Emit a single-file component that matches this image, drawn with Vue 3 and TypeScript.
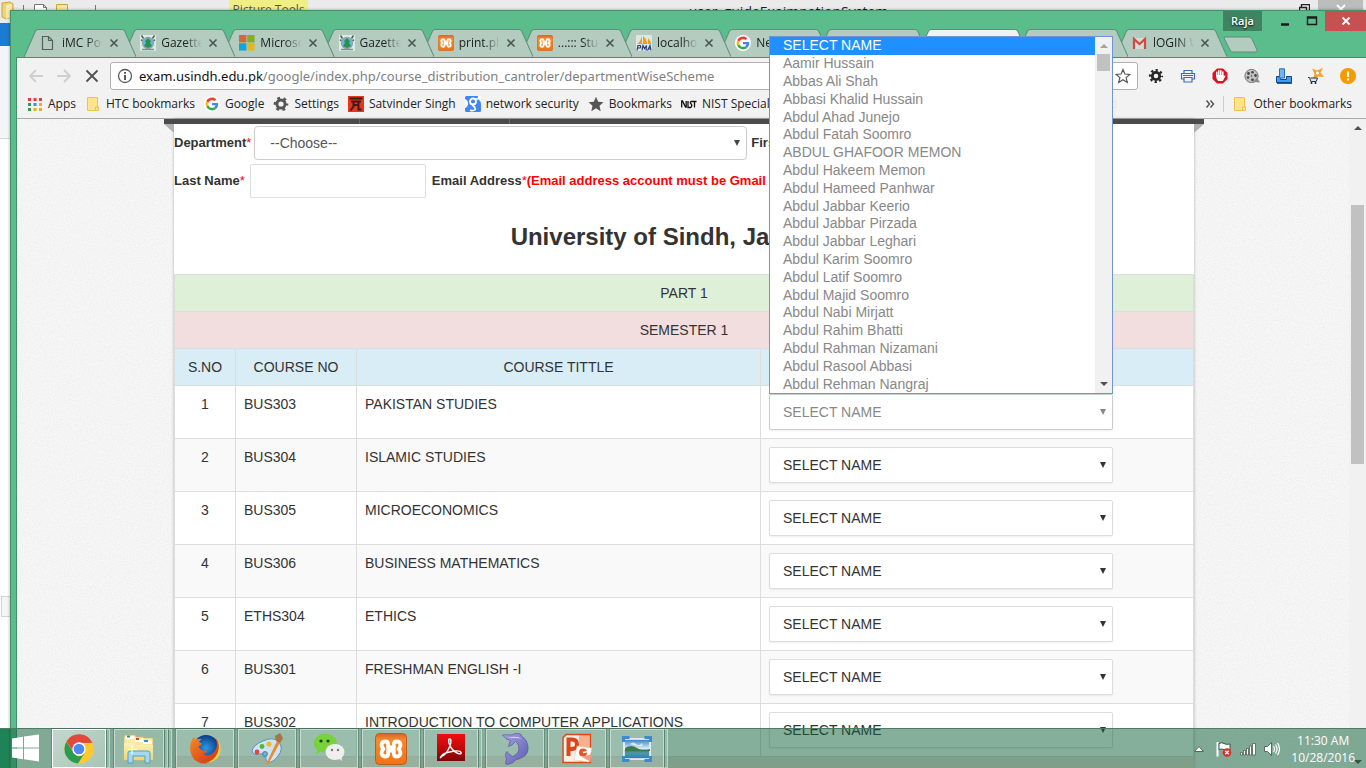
<script setup lang="ts">
import { ref } from 'vue'

interface Tab { icon: string; title: string; active?: boolean }
interface Course { no: number; code: string; title: string }
interface Task { icon: string; name: string; stack: number; active?: boolean }

const tabs: Tab[] = [
  { icon: 'page', title: 'iMC Po' },
  { icon: 'gazette', title: 'Gazette' },
  { icon: 'ms', title: 'Microso' },
  { icon: 'gazette', title: 'Gazette' },
  { icon: 'xampp', title: 'print.ph' },
  { icon: 'xampp', title: '...::: Stud' },
  { icon: 'pma', title: 'localho' },
  { icon: 'google', title: 'New' },
  { icon: '', title: '' },
  { icon: '', title: '', active: true },
  { icon: '', title: '' },
  { icon: 'gmail', title: 'lOGIN W' },
]

const bookmarks = [
  { icon: 'apps', label: 'Apps' },
  { icon: 'folder', label: 'HTC bookmarks' },
  { icon: 'google', label: 'Google' },
  { icon: 'gear', label: 'Settings' },
  { icon: 'torii', label: 'Satvinder Singh' },
  { icon: 'gblue', label: 'network security' },
  { icon: 'star', label: 'Bookmarks' },
  { icon: 'nist', label: 'NIST Special' },
]

const extensions = ['gear2', 'printer', 'hand', 'reel', 'blocks', 'cart', 'alert']

const names = [
  'SELECT NAME', 'Aamir Hussain', 'Abbas Ali Shah', 'Abbasi Khalid Hussain', 'Abdul Ahad Junejo',
  'Abdul Fatah Soomro', 'ABDUL GHAFOOR MEMON', 'Abdul Hakeem Memon', 'Abdul Hameed Panhwar',
  'Abdul Jabbar Keerio', 'Abdul Jabbar Pirzada', 'Abdul Jabbar Leghari', 'Abdul Karim Soomro',
  'Abdul Latif Soomro', 'Abdul Majid Soomro', 'Abdul Nabi Mirjatt', 'Abdul Rahim Bhatti',
  'Abdul Rahman Nizamani', 'Abdul Rasool Abbasi', 'Abdul Rehman Nangraj',
]

const courses: Course[] = [
  { no: 1, code: 'BUS303', title: 'PAKISTAN STUDIES' },
  { no: 2, code: 'BUS304', title: 'ISLAMIC STUDIES' },
  { no: 3, code: 'BUS305', title: 'MICROECONOMICS' },
  { no: 4, code: 'BUS306', title: 'BUSINESS MATHEMATICS' },
  { no: 5, code: 'ETHS304', title: 'ETHICS' },
  { no: 6, code: 'BUS301', title: 'FRESHMAN ENGLISH -I' },
  { no: 7, code: 'BUS302', title: 'INTRODUCTION TO COMPUTER APPLICATIONS' },
]

const tasks: Task[] = [
  { icon: 'chrome', name: 'Chrome', stack: 1, active: true },
  { icon: 'explorer', name: 'File Explorer', stack: 2 },
  { icon: 'firefox', name: 'Firefox', stack: 0 },
  { icon: 'paint', name: 'Paint', stack: 0 },
  { icon: 'wechat', name: 'WeChat', stack: 0 },
  { icon: 'xampp', name: 'XAMPP', stack: 0 },
  { icon: 'acrobat', name: 'Adobe Reader', stack: 1 },
  { icon: 'dolphin', name: 'MySQL', stack: 0 },
  { icon: 'ppt', name: 'PowerPoint', stack: 0 },
  { icon: 'photo', name: 'Photos', stack: 1 },
]

const highlighted = ref(0)
const lastName = ref('')
</script>

<template>
  <div class="desktop">
    <svg class="defs" aria-hidden="true">
      <defs>
        <linearGradient id="org" x1="0" y1="0" x2="0" y2="1"><stop offset="0" stop-color="#d5642a" /><stop offset=".2" stop-color="#f58a2c" /><stop offset="1" stop-color="#ef7413" /></linearGradient>
        <linearGradient id="redg" x1="0" y1="0" x2="0" y2="1"><stop offset="0" stop-color="#ef0f12" /><stop offset=".5" stop-color="#c40808" /><stop offset="1" stop-color="#7d0505" /></linearGradient>
        <linearGradient id="fold" x1="0" y1="0" x2="0" y2="1"><stop offset="0" stop-color="#fdf3b8" /><stop offset="1" stop-color="#ecd377" /></linearGradient>
        <linearGradient id="sky" x1="0" y1="0" x2="0" y2="1"><stop offset="0" stop-color="#2b7cc9" /><stop offset=".5" stop-color="#dff1fa" /><stop offset=".55" stop-color="#3f7a55" /><stop offset=".7" stop-color="#4f98b0" /><stop offset="1" stop-color="#2f78ae" /></linearGradient>
        <radialGradient id="globe"><stop offset="0" stop-color="#2a9be6" /><stop offset="1" stop-color="#0b3a86" /></radialGradient>
        <linearGradient id="fox" x1="0" y1="0" x2="1" y2="1"><stop offset="0" stop-color="#f58a1f" /><stop offset=".6" stop-color="#e2501b" /><stop offset="1" stop-color="#c4331c" /></linearGradient>
        <linearGradient id="dol" x1="0" y1="0" x2="1" y2="1"><stop offset="0" stop-color="#a5a4e6" /><stop offset="1" stop-color="#5e5cae" /></linearGradient>
      </defs>
      <symbol id="i-page" viewBox="0 0 16 16"><path d="M1.500 1.500h6l4 4v9h-10zM7.500 1.500v4h4" fill="none" stroke="#55605a" stroke-width="1.200" /></symbol>
      <symbol id="i-gazette" viewBox="0 0 16 16"><path d="M0 0h16v16H0z" fill="#dcebe4" /><path d="M1.500 0.500l2 3M14.500.5l-2 3M1 5l3 1M15 5l-3 1" stroke="#4b5a55" stroke-width="1.400" /><circle cx="8" cy="8" r="6.200" fill="#8fa3a8" /><circle cx="8" cy="8" r="5" fill="#62b9e0" /><path d="M8 3l3 3-1 2 2 3-4 2-4-2 2-3-1-2z" fill="#2f8f4e" /><path d="M2 14.500h12" stroke="#7d938b" stroke-width="1.500" /></symbol>
      <symbol id="i-ms" viewBox="0 0 16 16"><path d="M0 0h7.400v7.400H0z" fill="#d9653a" /><path d="M8.200 0h7.400v7.400H8.200z" fill="#7ab51d" /><path d="M0 8.200h7.400v7.400H0z" fill="#12a5dc" /><path d="M8.200 8.200h7.400v7.400H8.200z" fill="#e0b81e" /></symbol>
      <symbol id="i-xampp" viewBox="0 0 32 32"><rect x=".5" y=".5" width="31" height="31" rx="4" fill="url(#org)" stroke="#c25a1b" /><path d="M10.500 8.500C6 8.500 5.500 13 8.500 16C5.500 19 6 23.500 10.500 23.500C13.500 23.500 13.500 20.500 13 17.500L19 17.500C18.500 20.500 18.500 23.500 21.500 23.500C26 23.500 26.500 19 23.500 16C26.500 13 26 8.500 21.500 8.500C18.500 8.500 18.500 11.500 19 14.500L13 14.500C13.500 11.500 13.500 8.500 10.500 8.500Z" fill="none" stroke="#fff" stroke-width="3.800" stroke-linejoin="round" /></symbol>
      <symbol id="i-pma" viewBox="0 0 16 16"><path d="M0 0h16v16H0z" fill="#dce7e2" /><path d="M6 1v8H1q4-3 5-8zM7 1q4 3 4 8H7zM12 3q3 3 3 6h-3z" fill="#ef9d19" /><path d="M1 15.500l1-5h2q1.500 1.300 0 2.500H2M6 15.500l1-5 1.500 3 2-3-.5 5M11.500 15.500l2.500-5 1 5M12.500 14h2" fill="none" stroke="#283c78" stroke-width="1.200" /></symbol>
      <symbol id="i-google" viewBox="0 0 60 60"><circle cx="30" cy="30" r="30" fill="#fff" /><g transform="translate(6 6)"><path fill="#EA4335" d="M24 9.500c3.540 0 6.710 1.220 9.210 3.600l6.850-6.850C35.900 2.380 30.470 0 24 0 14.620 0 6.510 5.380 2.560 13.220l7.980 6.190C12.430 13.720 17.740 9.500 24 9.500z" /><path fill="#4285F4" d="M46.980 24.550c0-1.570-.15-3.090-.38-4.550H24v9.020h12.940c-.58 2.960-2.260 5.480-4.780 7.180l7.730 6c4.510-4.180 7.090-10.360 7.090-17.650z" /><path fill="#FBBC05" d="M10.530 28.590c-.48-1.450-.76-2.990-.76-4.590s.27-3.140.76-4.590l-7.980-6.190C.92 16.460 0 20.120 0 24s.92 7.540 2.560 10.780l7.970-6.190z" /><path fill="#34A853" d="M24 48c6.480 0 11.930-2.130 15.890-5.810l-7.730-6c-2.150 1.450-4.920 2.300-8.160 2.300-6.260 0-11.570-4.220-13.470-9.910l-7.980 6.190C6.510 42.620 14.620 48 24 48z" /></g></symbol>
      <symbol id="i-gmail" viewBox="0 0 16 16"><path d="M1 3h12v11H1z" fill="#d3dcd7" /><path d="M2 14V4l5.500 5L13 4v10" fill="none" stroke="#d34a3d" stroke-width="2.200" /></symbol>
      <symbol id="i-apps" viewBox="0 0 16 16"><path d="M1 2h3v3H1zM6.500 2h3v3h-3z M12 2h3v3h-3z" fill="#e53d33" /><path d="M1 7h3v3H1zM1 12h3v3H1z" fill="#2f9e54" /><path d="M6.500 7h3v3h-3z" fill="#4285f4" /><path d="M12 7h3v3h-3zM12 12h3v3h-3zM6.500 12h3v3h-3z" fill="#f0a91c" /></symbol>
      <symbol id="i-folder" viewBox="0 0 16 16"><path d="M2.500 1.500h10v9.500h1v3.500h-11z" fill="#ffe38d" stroke="#ecc44d" /><path d="M10.500 14v-3h3" fill="none" stroke="#ecc44d" /></symbol>
      <symbol id="i-gear" viewBox="0 0 16 16"><g fill="none" stroke="#565656"><circle cx="8" cy="8" r="4.100" stroke-width="3" /><circle cx="8" cy="8" r="6" stroke-width="2.600" stroke-dasharray="2.700 3.583" stroke-dashoffset="1.300" /></g></symbol>
      <symbol id="i-gear2" viewBox="0 0 16 16"><g fill="none" stroke="#262626"><circle cx="8" cy="8" r="3.700" stroke-width="2.800" /><circle cx="8" cy="8" r="5.900" stroke-width="2.400" stroke-dasharray="2.200 2.433" stroke-dashoffset="1.100" /></g></symbol>
      <symbol id="i-torii" viewBox="0 0 16 16"><path d="M0 0h16v16H0z" fill="#e8341c" /><path d="M1.500 2.500h13M3 5.500h10M5.500 5.500v5l-3 4M10.500 5.500v8h3M5 9h6" stroke="#3c1c14" stroke-width="2" fill="none" /></symbol>
      <symbol id="i-gblue" viewBox="0 0 16 16"><rect width="16" height="16" rx="1.500" fill="#4285f4" /><path d="M0 3q3 1 3 4.500T0 12M13 0q-1 3 1 4t2 4V0z" fill="#fff" /><circle cx="8" cy="5.500" r="3" fill="none" stroke="#fff" stroke-width="1.800" /><path d="M9.500 8q-3 1-1 2.200t1.800 3.300q-2.300 2.200-5.300.5M10 3h3" fill="none" stroke="#fff" stroke-width="1.700" /></symbol>
      <symbol id="i-star" viewBox="0 0 16 16"><path d="M8 .8l2.200 5 5.300.4-4 3.600 1.200 5.400L8 12.300l-4.700 2.900 1.200-5.400-4-3.600 5.300-.4z" fill="#555" /></symbol>
      <symbol id="i-nist" viewBox="0 0 16 16"><path d="M.7 11.500V5h.8l3 6h.7V5M7 5v6.500h3M15.500 5.500H10q-1.500 1 0 2.300t0 3.700M13.500 5.500v6" fill="none" stroke="#111" stroke-width="1.300" /></symbol>
      <symbol id="i-printer" viewBox="0 0 16 16"><path d="M4 5V2.500h8V5M3.500 11H1.500V5.500h13V11h-2M4 9.500h8V14H4zM3 7.500h10" fill="none" stroke="#3b6fb5" stroke-width="1.200" /></symbol>
      <symbol id="i-hand" viewBox="0 0 16 16"><path d="M5 .5h6L15.500 5v6L11 15.500H5L.5 11V5z" fill="#df1020" /><path d="M4.800 8V4.300M6.800 7V2.800M8.800 7V2.800M10.800 8V4" stroke="#fff" stroke-width="1.500" stroke-linecap="round" /><path d="M4 7h7.600v1.500L13 7.300q.8.300.2 1.200l-2.400 4.500H6.200Q4 11 4 7z" fill="#fff" /></symbol>
      <symbol id="i-reel" viewBox="0 0 16 16"><circle cx="7.500" cy="8" r="6.600" fill="#c4c4c4" stroke="#777" /><path d="M9 14l7 .5-3-5z" fill="#8b8b8b" /><g fill="#484848"><circle cx="4.500" cy="5.500" r="1.400" /><circle cx="8.500" cy="4.300" r="1.300" /><circle cx="11.500" cy="7.500" r="1.400" /><circle cx="4" cy="9.500" r="1.300" /><circle cx="7.500" cy="8" r=".8" /><circle cx="8.500" cy="11.800" r="1.400" /></g></symbol>
      <symbol id="i-blocks" viewBox="0 0 16 16"><path d="M.5 8.500h4v3h6v-3h5v6H.5z" fill="#3f9df2" stroke="#15457f" /><path d="M3.500.8h5V10h-5z" fill="#6fb4f3" stroke="#2c6db5" /><path d="M1 15.300h15" stroke="#12335c" /></symbol>
      <symbol id="i-cart" viewBox="0 0 16 16"><path d="M4 .5l4.500 2L15 0l-2.500 4.500L16 9l-5.500-.5L5 11l1.500-5z" fill="#f6a12c" /><circle cx="9.500" cy="5" r="1.500" fill="#fff" /><path d="M0 9.500h1.500l1.300 4h5.400L9.500 10H2.500" fill="#d5e3f2" stroke="#27364a" /><circle cx="3.500" cy="15" r="1" fill="#222" /><circle cx="7.500" cy="15" r="1" fill="#222" /></symbol>
      <symbol id="i-alert" viewBox="0 0 16 16"><circle cx="8" cy="8" r="8" fill="#f59b00" /><path d="M7 3.500h2v5.500H7zM7 10.500h2v2H7z" fill="#fff" /></symbol>
      <symbol id="i-chrome" viewBox="0 0 32 32"><circle cx="16" cy="16" r="14.600" fill="#fdc92f" /><path d="M3.500 8.500A14.600 14.600 0 0 1 29.500 10H16a6.500 6.500 0 0 0-6 8z" fill="#e2483c" /><path d="M3.400 8.700A14.600 14.600 0 0 0 15 30.600l6.500-10a6.500 6.500 0 0 1-11.300-1.500z" fill="#2a9c51" /><circle cx="16" cy="16" r="6.700" fill="#fff" /><circle cx="16" cy="16" r="5.300" fill="#4a8af4" /></symbol>
      <symbol id="i-explorer" viewBox="0 0 32 32"><path d="M1 5l1-3h10l1 2h7l1 1h9v22H1z" fill="url(#fold)" stroke="#d0b65c" stroke-width=".8" /><path d="M3 3h8v3H3zM12 6h8v3h-8zM20 8h9v3h-9z" fill="#fff" /><path d="M4 2.500h3v2H4z" fill="#24a344" /><path d="M13 5h3v2h-3z" fill="#d14a2c" /><path d="M21 7h4v2h-4z" fill="#2c93d1" /><path d="M1 10h9l2 2h18v15H1z" fill="url(#fold)" /><path d="M5 30V20q0-2 2-2h18q2 0 2 2v10h-5v-7H10v7z" fill="#a5d8ee" stroke="#4fa0c9" /><path d="M9 12v9M5 16.500h9" stroke="#fff" stroke-width="1.200" /></symbol>
      <symbol id="i-firefox" viewBox="0 0 32 32"><circle cx="17" cy="15" r="13" fill="url(#globe)" /><path d="M27 5q6 8 2.500 15.500T17 30.500Q6 31 2.500 22T4 5q2-2 2 2 3-2 7-1-2 1-3 3l3 1.500q-1 2-3.500 3 1 3 4 4 3 .5 5-.5-1 3.500-4.500 4 5 3 9.500-.5T28 11z" fill="url(#fox)" /><path d="M27 4q5 8 1.500 16T16 30q14-1 15.500-12Q32 10 27 4z" fill="#f8cf3c" /></symbol>
      <symbol id="i-paint" viewBox="0 0 32 32"><path d="M12 8q10-5 16 1 5 7-1 14-5 7-10 6-3-1-2-5 0-4-6-3-7 2-8-3Q2 12 12 8z" fill="#cfe3f2" stroke="#5c90bb" /><circle cx="6" cy="19" r="2.400" fill="#e4453c" /><circle cx="11" cy="13.500" r="2.400" fill="#4fb83c" /><circle cx="18" cy="11" r="2.600" fill="#f3b92b" /><circle cx="14" cy="21" r="2.400" fill="#7bb3d5" stroke="#427aa0" /><path d="M15 31L26 8l3 1.500-12 22z" fill="#e88d2b" /><path d="M25 8l-1-5 5-3 3 5-3 5z" fill="#a67448" /></symbol>
      <symbol id="i-wechat" viewBox="0 0 32 32"><path d="M2.500 21.500L4.500 17A11.500 9.500 0 1 1 11 19.500L7.500 19z" fill="#77d23d" /><circle cx="8" cy="8" r="1.600" fill="#1f4716" /><circle cx="15" cy="8" r="1.600" fill="#1f4716" /><ellipse cx="22" cy="19" rx="9.500" ry="8" fill="#eeefee" /><path d="M25 25l4 3-.5-5z" fill="#eeefee" /><circle cx="19" cy="17" r="1.200" fill="#777" /><circle cx="25" cy="17" r="1.200" fill="#777" /></symbol>
      <symbol id="i-acrobat" viewBox="0 0 32 32"><path d="M2 1h28v27H2z" fill="url(#redg)" /><path d="M7 23q4-1 8-10 2-6 0-7t-1 4q2 7 8 10 5 2 4-.5t-9-1q-8 1-10.500 4.500T7 23z" fill="none" stroke="#fff" stroke-width="1.400" /></symbol>
      <symbol id="i-dolphin" viewBox="0 0 32 32"><path d="M3.500 2q5-.5 9 0 6-3 9-1 1 1.500 1 2 6 4 6.500 11 .5 6-3.500 9-5 3-9 4-1.500 3-8 4.500-3-.5-2-2 2-3 0-7 0-3 1.500-4 2 3 5.500 5 8-3 6-11-1-3-3-4-3 4-7 5 1-4 2-6-5-1-8-5.500z" fill="url(#dol)" stroke="#4d4c93" stroke-width=".6" /><path d="M9 5q8-3 14 1-7-2-14-1z" fill="#dcdcfa" /></symbol>
      <symbol id="i-ppt" viewBox="0 0 32 32"><path d="M5 1.500h24.500v28H2V4.500z" fill="#f6b08d" stroke="#d9491c" stroke-width="1.300" /><path d="M3 5L6 2.500h12v26H3z" fill="#fdeee6" /><path d="M7.500 23V6.500h3.500q5 0 5 4.700T11 16H8" fill="none" stroke="#d8481a" stroke-width="4" /><path d="M16 13l15 2-3 14-15-2z" fill="#fff" stroke="#e9b9a3" stroke-width=".5" /><circle cx="22" cy="19.500" r="4" fill="#e2562a" /><path d="M22 19.500l5-1" stroke="#fff" stroke-width="1.500" /><path d="M21 24l9 5 1-8z" fill="#f09c7c" /></symbol>
      <symbol id="i-photo" viewBox="0 0 32 32"><path d="M3 6h26v20H3z" fill="url(#sky)" stroke="#f7fbfd" stroke-width="1.500" /><path d="M4 15q6-4 12 0t13 1v2H4z" fill="#3d7a4d" /><path d="M9 11q3-3 6 0t6-1q2 4-4 3t-8-2z" fill="#fff" opacity=".7" /><g fill="none" stroke="#3a8cd0" stroke-width="3"><path d="M2.500 9V4.500h6M23.500 4.500h6V9M29.500 23v4.500h-6M8.500 27.500h-6V23" /></g></symbol>
    </svg>

    <!-- window partly visible behind the browser -->
    <div class="back">
      <div class="back-title">
        <svg class="back-icons" viewBox="0 0 110 23" aria-hidden="true">
          <path d="M2 3l8-1 3 2v13l-7 2-4-2z" fill="#efd476" stroke="#c9a744" /><path d="M6 5l6-1v13l-6 2z" fill="#f8e9ae" />
          <path d="M23.500 5v14M95.500 5v14" stroke="#777" /><path d="M34.500 4.500h9l3 3v12h-12zM43.500 4.500v3h3" fill="#fff" stroke="#777" />
          <path d="M56.500 4.500h11v12h-11z" fill="#f8e3a0" stroke="#c9a23c" />
        </svg>
        <span class="pic-tools">Picture Tools</span>
        <span class="back-name">user_guideExaimnationSystem</span>
        <svg class="restore" viewBox="0 0 11 10" aria-hidden="true"><path d="M.5 3.500h7v6h-7zM2.500 3.500v-3h8v7h-3" fill="none" stroke="#222" stroke-width="1.400" /></svg>
        <span class="back-close"><svg viewBox="0 0 12 12" aria-hidden="true"><path d="M2 2l8 8M10 2l-8 8" stroke="#fff" stroke-width="1.800" /></svg></span>
      </div>
      <div class="back-blue"></div>
      <div class="back-pane"></div>
      <div class="back-body"><i></i></div>
      <div class="back-foot"></div>
    </div>

    <div class="window">
      <div class="controls">
        <button class="user">Raja</button>
        <button class="ctl" aria-label="Minimize"><svg viewBox="0 0 12 12"><path d="M2 9.500h8" stroke="#1c1c1c" stroke-width="2.500" /></svg></button>
        <button class="ctl" aria-label="Maximize"><svg viewBox="0 0 12 12"><path d="M1.500 2h9v7.500h-9zM1 3h10" fill="none" stroke="#1c1c1c" stroke-width="1.400" /></svg></button>
        <button class="ctl close" aria-label="Close"><svg viewBox="0 0 12 12"><path d="M2.500 2.500l7 7M9.500 2.500l-7 7" stroke="#fff" stroke-width="1.800" /></svg></button>
      </div>

      <div class="tabstrip">
        <div class="tabs">
          <div v-for="(t, i) in tabs" :key="i" class="tab" :style="{ zIndex: t.active ? 20 : 15 - i }">
            <svg class="shape" viewBox="0 0 112 28" preserveAspectRatio="none" aria-hidden="true">
              <path d="M0 28L11.500 2Q12.500.5 14.500.5H97.500Q99.500.5 100.500 2L112 28z" :fill="t.active ? '#f2f2f2' : '#b4ccc0'" />
              <path d="M0 28L11.500 2Q12.500.5 14.500.5H97.500Q99.500.5 100.500 2L112 28" fill="none" stroke="#5c8f77" />
            </svg>
            <template v-if="t.icon">
              <svg class="fav"><use :href="'#i-' + t.icon" /></svg>
              <span class="tab-title">{{ t.title }}</span>
              <button class="tab-x" aria-label="Close tab"><svg viewBox="0 0 10 10"><path d="M1.500 1.500l7 7M8.500 1.500l-7 7" stroke="#4c5651" stroke-width="1.600" /></svg></button>
            </template>
          </div>
        </div>
        <button class="newtab" aria-label="New tab"><svg viewBox="0 0 36 18"><path d="M2 1h24q2 0 3 2l5 11q1 2-1 2H10q-2 0-3-2L1.500 3Q.5 1 2 1z" fill="#b4ccc0" stroke="#5c8f77" /></svg></button>
      </div>

      <div class="client">
        <div class="toolbar">
          <button class="nav" aria-label="Back"><svg viewBox="0 0 16 16"><path d="M15 8H2M8 2L2 8l6 6" fill="none" stroke="#cfcfcf" stroke-width="1.800" /></svg></button>
          <button class="nav" aria-label="Forward"><svg viewBox="0 0 16 16"><path d="M1 8h13M8 2l6 6-6 6" fill="none" stroke="#cfcfcf" stroke-width="1.800" /></svg></button>
          <button class="nav" aria-label="Stop"><svg viewBox="0 0 16 16"><path d="M2.500 2.500l11 11M13.500 2.500l-11 11" stroke="#505050" stroke-width="1.800" /></svg></button>
          <div class="omni">
            <svg class="info" viewBox="0 0 16 16"><circle cx="8" cy="8" r="6.500" fill="none" stroke="#5a5a5a" stroke-width="1.300" /><path d="M7 7h2v5H7zM7 4h2v1.800H7z" fill="#5a5a5a" /></svg>
            <span class="url"><b>exam.usindh.edu.pk</b>/google/index.php/course_distribution_cantroler/departmentWiseScheme</span>
            <svg class="fav-star" viewBox="0 0 16 16"><path d="M8 1.500l1.900 4.500 4.900.4-3.700 3.200 1.200 4.800L8 11.800l-4.300 2.600 1.200-4.800L1.200 6.400 6.100 6z" fill="none" stroke="#555" stroke-width="1.200" /></svg>
          </div>
          <div class="exts">
            <button v-for="e in extensions" :key="e" class="ext" :aria-label="e"><svg><use :href="'#i-' + e" /></svg></button>
          </div>
        </div>

        <nav class="bookmarks">
          <a v-for="b in bookmarks" :key="b.label" href="#" class="bm"><svg class="bm-icon"><use :href="'#i-' + b.icon" /></svg>{{ b.label }}</a>
          <span class="bm-rest">ti</span>
          <button class="more" aria-label="More bookmarks"><svg viewBox="0 0 10 10"><path d="M1.500 1.500L4.500 5l-3 3.500M5.500 1.500L8.500 5l-3 3.500" fill="none" stroke="#505050" stroke-width="1.400" /></svg></button>
          <i class="sep"></i>
          <a href="#" class="bm"><svg class="bm-icon"><use href="#i-folder" /></svg>Other bookmarks</a>
        </nav>

        <div class="viewport">
          <svg class="paper" aria-hidden="true">
            <filter id="grain"><feTurbulence type="fractalNoise" baseFrequency=".7" numOctaves="3" /><feColorMatrix values="0 0 0 0 .5  0 0 0 0 .5  0 0 0 0 .5  .3 0 0 0 -.1" /></filter>
            <rect width="100%" height="100%" filter="url(#grain)" />
          </svg>
          <div class="scroll-area">
            <div class="page">
              <div class="menubar"><i></i><i></i></div>
              <form class="form" @submit.prevent>
                <div class="line">
                  <label for="dept">Department<em>*</em></label>
                  <span class="sel dept"><select id="dept"><option>--Choose--</option></select></span>
                  <span class="lbl">First Name</span>
                </div>
                <div class="line">
                  <label for="last">Last Name<em>*</em></label>
                  <input id="last" v-model="lastName" type="text" />
                  <span class="lbl email">Email Address<em>*</em><strong>(Email address account must be Gmail</strong></span>
                </div>
              </form>
              <h1>University of Sindh, Jamshoro</h1>
              <table>
                <colgroup><col class="c1" /><col class="c2" /><col class="c3" /><col /></colgroup>
                <thead>
                  <tr class="part"><th colspan="4">PART 1</th></tr>
                  <tr class="sem"><th colspan="4">SEMESTER 1</th></tr>
                  <tr class="cols"><th>S.NO</th><th>COURSE NO</th><th>COURSE TITTLE</th><th></th></tr>
                </thead>
                <tbody>
                  <tr v-for="(c, i) in courses" :key="c.code">
                    <td class="num">{{ c.no }}</td>
                    <td>{{ c.code }}</td>
                    <td>{{ c.title }}</td>
                    <td class="pick">
                      <span class="sel" :class="{ open: i === 0 }">
                        <select :aria-label="'Teacher for ' + c.title"><option>SELECT NAME</option></select>
                        <span v-if="i === 0" class="popup">
                          <span class="options" role="listbox" aria-label="Names">
                            <span v-for="(n, k) in names" :key="n" role="option" :aria-selected="k === highlighted" class="option" :class="{ on: k === highlighted }">{{ n }}</span>
                          </span>
                          <span class="pop-scroll"><i class="up"></i><i class="pop-thumb"></i><i class="down"></i></span>
                        </span>
                      </span>
                    </td>
                  </tr>
                  <tr class="sem"><td colspan="4" class="num">&nbsp;</td></tr>
                </tbody>
              </table>
            </div>
          </div>
          <div class="scrollbar"><i class="up"></i><i class="thumb"></i><i class="down"></i></div>
        </div>
      </div>
    </div>

    <footer class="taskbar">
      <button class="start" aria-label="Start"><svg viewBox="0 0 28 28"><path d="M0 4.500l11-1.700v10.700H0zM12 2.600L27 .5v13H12zM0 14.500h11v10.700L0 23.500zM12 14.500h15v13l-15-2.200z" fill="#fff" /></svg></button>
      <button v-for="t in tasks" :key="t.name" class="task" :class="{ active: t.active }" :aria-label="t.name">
        <span class="face"><svg><use :href="'#i-' + t.icon" /></svg></span>
        <i v-for="n in t.stack" :key="n" class="edge"></i>
      </button>
      <div class="tray">
        <svg class="chev" viewBox="0 0 10 6"><path d="M5 .5L9.500 5.500h-9z" fill="#fff" stroke="#4d6b5d" /></svg>
        <svg class="tico" viewBox="0 0 16 16"><path d="M1.500 1v14.500" stroke="#fff" stroke-width="2" /><path d="M3 2.500q3-1.500 5 0t6 .5v6q-4 .5-6-.500t-5 0z" fill="#fff" stroke="#3d5248" /><circle cx="11" cy="11.500" r="4.300" fill="#dc2a22" /><path d="M9.200 9.700l3.600 3.600M12.800 9.700l-3.600 3.600" stroke="#fff" stroke-width="1.500" /></svg>
        <svg class="tico" viewBox="0 0 16 16"><path d="M.5 11.500h2v2.500h-2zM3.500 9.500h2V14h-2zM6.500 7.500h2V14h-2zM9.500 5h2v9h-2zM12.500 2.500h3V14h-3z" fill="#fff" stroke="#3d5248" stroke-width=".7" /></svg>
        <svg class="tico" viewBox="0 0 16 16"><path d="M.5 5.500h3l4-4v13l-4-4h-3z" fill="#fff" stroke="#3d5248" stroke-width=".8" /><path d="M9.500 5q2 3 0 6M11.500 3.500q3 4.500 0 9M13.500 2q4 6 0 12" fill="none" stroke="#fff" stroke-width="1.200" /></svg>
        <div class="clock"><span>11:30 AM</span><span>10/28/2016</span></div>
      </div>
    </footer>
  </div>
</template>

<style>
body { margin: 0; overflow: hidden; }
</style>

<style scoped>
* { box-sizing: border-box; }
button { border: 0; padding: 0; background: none; font: inherit; color: inherit; }
svg { display: block; }
.defs { position: absolute; width: 0; height: 0; }
.desktop { position: relative; height: 100vh; overflow: hidden; background: #fff; font: 12px/16px "Open Sans", "Noto Sans", sans-serif; color: #222; }

.back { display: flex; flex-direction: column; height: 100%; }
.back-title { display: flex; height: 23px; background: #ebebeb; flex: none; }
.back-icons { width: 110px; height: 23px; }
.pic-tools { margin-left: 119px; width: 79px; background: #f1ef83; text-align: center; line-height: 20px; height: 23px; color: #555; }
.back-name { flex: 1; text-align: center; font-size: 14px; line-height: 24px; padding-right: 30px; }
.restore { width: 11px; height: 10px; margin-top: 4px; }
.back-close { display: flex; justify-content: center; margin: 0 3px 0 8px; width: 45px; background: #bcbcbc; }
.back-close svg { width: 12px; height: 12px; margin-top: 3px; }
.back-blue { height: 23px; background: #1c7bd0; flex: none; }
.back-pane { height: 93px; background: #f3f5f8; border-bottom: 1px solid #d4d7dc; flex: none; }
.back-body { flex: 1; display: flex; align-items: flex-end; padding: 0 0 111px 1px; }
.back-body i { width: 20px; height: 21px; background: #f5f5f5; border: 1px solid #d4d4d4; }
.back-foot { height: 40px; background: #2fa977; flex: none; }

.window { position: absolute; inset: 10px 0 0 10px; background: #5bbd8c; border: 1px solid #43906a; border-width: 1px 0 0 1px; display: flex; flex-direction: column; box-shadow: 0 0 3px #0005; }
.controls { display: flex; justify-content: flex-end; height: 18px; flex: none; }
.user { width: 39px; height: 20px; margin-right: 9px; background: #3f8362; color: #fff; line-height: 20px; text-shadow: 0 1px 2px #000; font-size: 11px; font-weight: 600; }
.ctl { width: 27px; height: 20px; display: grid; place-items: center; }
.ctl svg { width: 12px; height: 12px; }
.ctl.close { width: 41px; background: #c75050; }

.tabstrip { display: flex; height: 28px; padding: 0 107px 0 13px; flex: none; }
.tabs { display: flex; flex: 1; min-width: 0; }
.tab { position: relative; flex: 1 1 0; min-width: 0; margin-right: -13px; display: flex; align-items: center; padding: 0 17px; }
.shape { position: absolute; inset: 0; width: 100%; height: 28px; }
.fav { position: relative; width: 16px; height: 16px; flex: none; }
.tab-title { position: relative; flex: 1; min-width: 0; margin: 0 6px 0 5px; overflow: hidden; white-space: nowrap; mask-image: linear-gradient(90deg, #000 60%, transparent); }
.tab-x { position: relative; width: 10px; height: 10px; }
.newtab { width: 36px; height: 18px; margin: 7px 0 0 9px; }
.newtab svg { width: 36px; height: 18px; }

.client { flex: 1; min-height: 0; display: flex; flex-direction: column; margin-left: 5px; border: 1px solid #43906a; border-width: 1px 0 0 1px; }
.toolbar { display: flex; align-items: center; height: 36px; padding: 0 10px 0 11px; background: #f2f2f2; flex: none; }
.nav { width: 16px; height: 16px; margin-right: 12px; }
.nav + .nav + .nav { margin-right: 10px; }
.omni { flex: 1; display: flex; align-items: center; height: 28px; background: #fff; border: 1px solid #b0b0b0; border-radius: 3px; padding: 0 6px; min-width: 0; }
.info { width: 16px; height: 16px; margin-right: 6px; }
.url { flex: 1; font: 13px/20px "Noto Sans", "Open Sans", sans-serif; color: #808080; white-space: nowrap; overflow: hidden; }
.url b { font-weight: 400; color: #111; }
.fav-star { width: 16px; height: 16px; }
.exts { display: flex; gap: 16px; margin-left: 10px; }
.ext, .ext svg { width: 16px; height: 16px; }
.bookmarks { display: flex; align-items: center; height: 25px; padding: 0 14px 4px 10px; background: #f2f2f2; border-bottom: 1px solid #a9a9a9; flex: none; white-space: nowrap; }
.bm { display: flex; align-items: center; gap: 5px; margin-right: 9px; color: #222; text-decoration: none; }
.bm:last-child { margin-right: 0; }
.bm-icon { width: 16px; height: 16px; flex: none; }
.bm-rest { margin: 0 88px 0 auto; color: #aaa; mask-image: linear-gradient(90deg, #000, transparent); }
.more { width: 10px; height: 10px; }
.more svg { width: 10px; height: 10px; }
.sep { width: 1px; height: 16px; background: #ccc; margin: 0 8px; }

.viewport { position: relative; flex: 1; min-height: 0; display: flex; background: #f7f7f7; font: 14px/20px "Liberation Sans", Arial, sans-serif; color: #333; }
.paper { position: absolute; inset: 0; width: 100%; height: 100%; }
.scroll-area { position: relative; flex: 1; padding: 0 155px 0 157px; }
.page { background: #fff; box-shadow: 0 0 3px #0004; }
.menubar { position: relative; height: 5px; margin: 0 -10px; background: #4b4b4b; display: flex; padding-left: 195px; gap: 149px; }
.menubar i { width: 1px; background: #6a6a6a; }
.menubar::before, .menubar::after { content: ""; position: absolute; top: 5px; left: 0; border-top: 9px solid #b0b0b0; border-left: 10px solid transparent; }
.menubar::after { left: auto; right: 0; border-left: 0; border-right: 10px solid transparent; }
.form { padding-top: 2px; font-size: 13px; font-weight: 700; white-space: nowrap; }
.line { display: flex; align-items: center; height: 34px; margin-bottom: 4px; overflow: hidden; }
em { font-style: normal; font-weight: 400; color: red; }
strong { color: red; }
.dept { margin: 0 4px 0 3px; }
.lbl.email { margin-left: 6px; }
input { width: 176px; height: 34px; margin-left: 5px; border: 1px solid #ddd; border-radius: 2px; background: #fff; box-shadow: 0 1px 1px #0001; font: inherit; }
.sel { position: relative; display: block; width: 344px; }
.sel select { display: block; width: 100%; height: 36px; padding: 0 13px; appearance: none; border: 1px solid #ddd; border-radius: 2px; background: #fff; font: 14px "Liberation Sans", Arial, sans-serif; color: #333; box-shadow: 0 1px 2px #0001; opacity: 1; }
.sel::after { content: ""; position: absolute; right: 7px; top: 15px; border-top: 6px solid #333; border-left: 3px solid transparent; border-right: 3px solid transparent; }
.sel.dept { width: 493px; flex: none; }
.sel.dept select { height: 34px; border-color: #ccc; border-radius: 4px; padding: 0 15px; color: #555; }
.sel.dept::after { top: 14px; border-top-color: #444; right: 7px; }
.sel.open select { color: #888; border-color: #ccc; }
.sel.open::after { border-top-color: #888; }
h1 { margin: 0; font-size: 24px; line-height: 28px; height: 72px; padding-top: 21px; text-align: center; }
table { width: 100%; border-collapse: collapse; table-layout: fixed; }
.c1 { width: 61px; }
.c2 { width: 121px; }
.c3 { width: 404px; }
th, td { border: 1px solid #ddd; padding: 8px; font-weight: 400; text-align: left; vertical-align: top; }
th, .num { text-align: center; }
tbody tr:nth-child(even) { background: #f9f9f9; }
.part { background: #dff0d8; }
tr.sem, tbody tr.sem { background: #f2dede; }
.cols { background: #d9edf7; }

.popup { position: absolute; z-index: 50; left: 0; right: 0; bottom: 100%; height: 358px; display: flex; background: #fff; border: 1px solid #7095d2; }
.options { flex: 1; display: flex; flex-direction: column; }
.option { flex: 1; display: flex; align-items: center; min-height: 0; padding: 0 0 1px 13px; color: #888; }
.option.on { background: #1e90ff; color: #fff; }
.pop-scroll, .scrollbar { display: flex; flex-direction: column; align-items: center; background: #f1f1f1; }
.pop-scroll { width: 17px; }
.up, .down { border: 4px solid transparent; border-top: 0; border-bottom: 4px solid #505050; margin-top: 7px; }
.pop-scroll .up { border-bottom-color: #a3a3a3; }
.down { border-bottom: 0; border-top: 4px solid #505050; margin: auto 0 7px; }
.pop-thumb { width: 13px; height: 17px; margin-top: 6px; background: #c1c1c1; }
.scrollbar { position: relative; width: 17px; }
.thumb { width: 13px; height: 259px; margin-top: 75px; background: #c1c1c1; }
.scrollbar .down { margin-bottom: 4px; }

.taskbar { position: absolute; z-index: 60; inset: auto 0 0; height: 40px; display: flex; align-items: stretch; background: #0d5f3780; border-top: 1px solid #4d7c66; color: #fff; }
.start { display: flex; align-items: center; width: 52px; padding: 0 0 2px 12px; }
.start svg { width: 28px; height: 28px; }
.task { display: flex; width: 58px; margin-right: 4px; }
.face { flex: 1; display: grid; justify-items: center; align-items: start; padding-top: 3px; height: 39px; border: 1px solid #d4e2dacc; background: #ffffff2e; outline: 1px solid #3c665266; }
.task.active .face { background: linear-gradient(135deg, #ffffff88, #ffffff50); border-color: #fff; }
.face svg { width: 32px; height: 32px; }
.edge { width: 4px; height: 39px; border: 1px solid #d4e2daaa; border-left: 1px solid #5c8370; background: #ffffff2e; }
.tray { display: flex; align-items: center; margin-left: auto; padding-right: 11px; }
.chev { width: 10px; height: 6px; margin-right: 12px; }
.tico { width: 16px; height: 16px; margin-right: 8px; }
.clock { display: flex; flex-direction: column; text-align: center; line-height: 17px; margin-left: 3px; }
</style>
